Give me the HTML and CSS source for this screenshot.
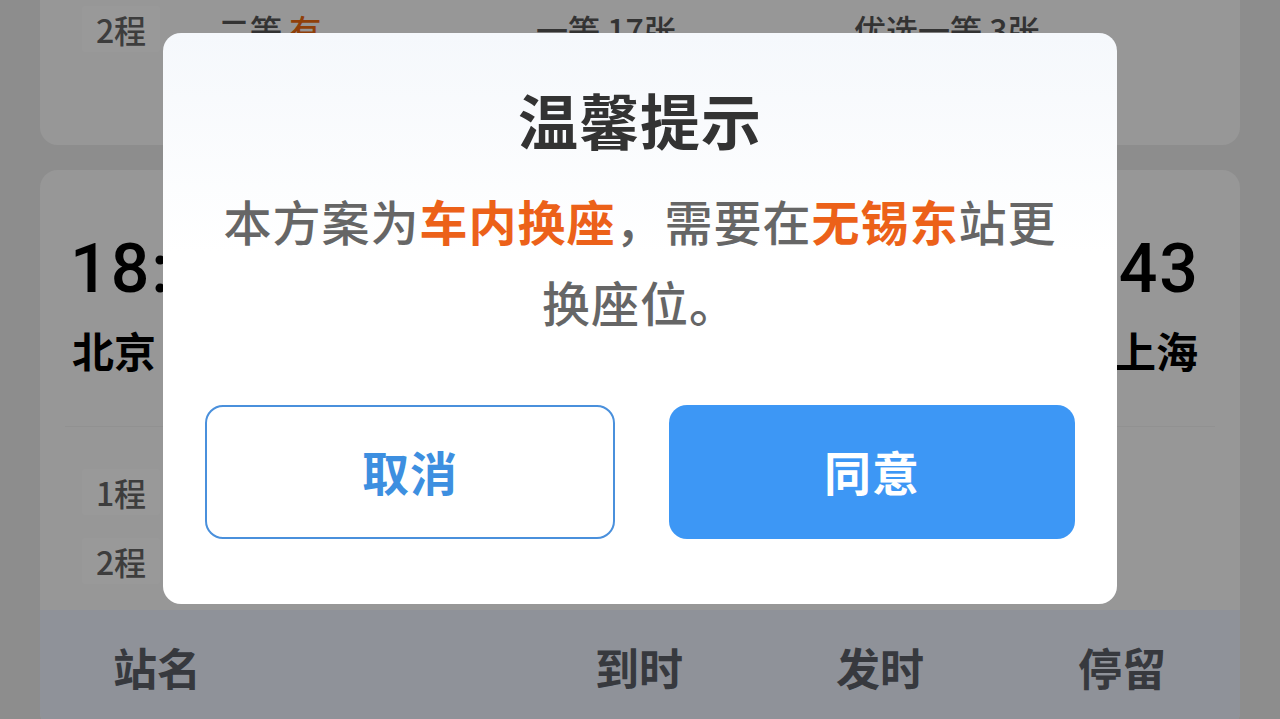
FILE: index.html
```html
<!DOCTYPE html>
<html lang="zh-CN">
<head>
<meta charset="utf-8">
<title>温馨提示</title>
<link rel="stylesheet" href="styles.css">
</head>
<body>
<div class="page">
  <section class="card card-top">
    <div class="seat-row">
      <span class="tag">2程</span>
      <span class="seat">二等 <em class="hot">有</em></span>
      <span class="seat">一等 17张</span>
      <span class="seat">优选一等 3张</span>
    </div>
  </section>

  <section class="card card-main">
    <div class="journey">
      <div class="end">
        <div class="time">18:13</div>
        <div class="station">北京</div>
      </div>
      <div class="end end-right">
        <div class="time">23:43</div>
        <div class="station">上海</div>
      </div>
    </div>
    <div class="divider"></div>
    <div class="legs">
      <div class="leg"><span class="tag">1程</span></div>
      <div class="leg"><span class="tag">2程</span></div>
    </div>
    <div class="stops-head">
      <span class="col col-name">站名</span>
      <span class="col col-arr">到时</span>
      <span class="col col-dep">发时</span>
      <span class="col col-stay">停留</span>
    </div>
  </section>
</div>

<div class="mask"></div>

<div class="dialog">
  <h2 class="dialog-title">温馨提示</h2>
  <p class="dialog-text"><span>本方案为</span><b class="hl">车内换座</b><span>，需要在</span><b class="hl">无锡东</b><span>站更</span><span>换座位。</span></p>
  <div class="dialog-actions">
    <button class="btn btn-cancel">取消</button>
    <button class="btn btn-ok">同意</button>
  </div>
</div>
</body>
</html>
```

FILE: styles.css
```css
* { box-sizing: border-box; }

html, body {
  margin: 0;
  padding: 0;
  height: 100%;
  overflow: hidden;
}

body {
  background: #ececec;
  font-family: "Noto Sans CJK SC", "Noto Sans", sans-serif;
  color: #222;
}

.page {
  padding: 0 40px;
}

.card {
  background: #fcfcfc;
  border-radius: 18px;
}

.card-top {
  margin-top: -30px;
  padding: 34px 0 0 42px;
  height: 175px;
}

.seat-row {
  display: flex;
  align-items: center;
  height: 50px;
  font-size: 32px;
  color: #555;
}

.tag {
  display: inline-flex;
  align-items: center;
  justify-content: center;
  width: 78px;
  height: 46px;
  background: #ffffff;
  color: #666;
  font-size: 32px;
  font-weight: 500;
  border-radius: 4px;
}

.seat-row .tag { margin-right: 58px; }

.seat { width: 318px; font-weight: 500; }

.hot { font-style: normal; color: #f06a10; }

.card-main {
  margin-top: 25px;
  overflow: hidden;
}

.journey {
  display: flex;
  justify-content: space-between;
  padding: 65px 42px 0 30px;
}

.end-right { text-align: right; }

.time {
  font-family: Roboto, "Liberation Sans", sans-serif;
  font-size: 68px;
  line-height: 68px;
  letter-spacing: 2px;
  font-weight: 500;
  color: #000;
}

.end-right .time { margin-right: -2px; }

.station {
  margin-top: 22px;
  padding-left: 2px;
  font-size: 42px;
  line-height: 50px;
  font-weight: 700;
  color: #000;
}

.divider {
  margin: 51px 25px 0;
  height: 1px;
  background: #f2f2f2;
}

.legs {
  padding: 42px 0 26px 42px;
  display: flex;
  flex-direction: column;
  gap: 23px;
}

.stops-head {
  display: flex;
  align-items: center;
  height: 120px;
  background: #eef4ff;
  font-size: 44px;
  font-weight: 700;
  color: #5c6068;
  padding-bottom: 6px;
}

.col { display: block; }
.col-name { margin-left: 73px; width: 482px; }
.col-arr { width: 241px; }
.col-dep { width: 242px; }

.mask {
  position: fixed;
  inset: 0;
  background: rgba(0, 0, 0, 0.4);
}

.dialog {
  position: fixed;
  left: 163px;
  top: 33px;
  width: 954px;
  height: 571px;
  padding: 46px 42px 0;
  border-radius: 18px;
  background: linear-gradient(180deg, #f5f8fc 0px, #ffffff 220px);
  text-align: center;
}

.dialog-title {
  margin: 0;
  font-size: 60px;
  line-height: 80px;
  font-weight: 700;
  letter-spacing: 1px;
  color: #333;
}

.dialog-text {
  margin: 21px 0 0;
  font-size: 48px;
  line-height: 81px;
  letter-spacing: 1px;
  font-weight: 500;
  color: #666;
}

.hl {
  font-weight: 700;
  color: #ec6119;
}

.dialog-actions {
  display: flex;
  gap: 54px;
  margin-top: 63px;
}

.btn {
  flex: 1;
  height: 134px;
  padding: 0 0 4px;
  border-radius: 18px;
  font-family: "Noto Sans CJK SC", sans-serif;
  font-size: 47px;
  font-weight: 700;
  letter-spacing: 1px;
  cursor: pointer;
}

.btn-cancel {
  background: #fff;
  border: 2px solid #4a90dc;
  color: #3d8fe0;
}

.btn-ok {
  background: #3d97f5;
  border: none;
  color: #fff;
}
```
